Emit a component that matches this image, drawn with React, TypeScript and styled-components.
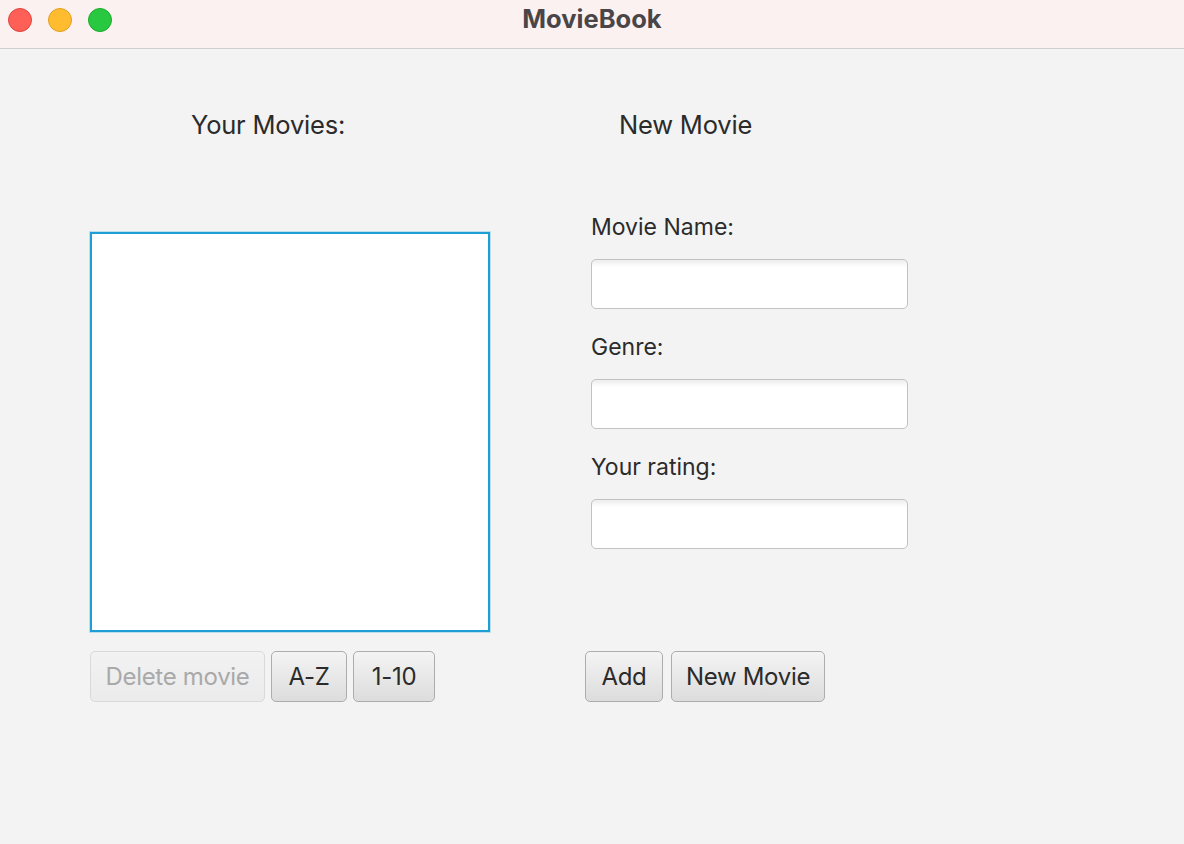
import React from "react";
import styled, { createGlobalStyle } from "styled-components";

const Global = createGlobalStyle`
  html, body { margin: 0; padding: 0; background: #f3f3f3; }
  body { font-family: Inter, "Noto Sans", sans-serif; color: #2b2b2b; }
  * { box-sizing: border-box; }
`;

const Window = styled.div`
  width: 1184px;
  height: 844px;
  background: #f3f3f3;
  display: flex;
  flex-direction: column;
`;

const TitleBar = styled.div`
  height: 49px;
  flex: none;
  background: #fcf1f1;
  border-bottom: 1px solid #cfcfcf;
  display: flex;
  align-items: center;
  position: relative;
  padding-left: 8px;
`;

const Lights = styled.div`
  display: flex;
  gap: 16px;
  margin-top: -9px;
`;

const Light = styled.span<{ $c: string; $b: string }>`
  width: 24px;
  height: 24px;
  border-radius: 50%;
  background: ${(p) => p.$c};
  border: 1px solid ${(p) => p.$b};
`;

const Title = styled.div`
  position: absolute;
  left: 0;
  right: 0;
  top: 4px;
  text-align: center;
  font-weight: 700;
  font-size: 25.5px;
  line-height: 30px;
  color: #4a4546;
`;

const Body = styled.div`
  display: grid;
  grid-template-columns: 400px 340px;
  column-gap: 95px;
  padding: 61px 0 0 90px;
`;

const Column = styled.div`
  display: flex;
  flex-direction: column;
`;

const Heading = styled.div<{ $indent: number }>`
  font-size: 25.5px;
  line-height: 30px;
  height: 30px;
  padding-left: ${(p) => p.$indent}px;
  color: #2b2b2b;
  letter-spacing: -0.2px;
`;

const ListBox = styled.div`
  margin-top: 92px;
  width: 400px;
  height: 400px;
  background: #fff;
  border: 2px solid #1d9ed4;
  box-shadow: 0 0 0 1px rgba(29, 158, 212, 0.25);
`;

const Form = styled.div`
  margin-top: 72px;
  padding-left: 6px;
  display: flex;
  flex-direction: column;
  height: 420px;
`;

const Label = styled.label`
  font-size: 23px;
  line-height: 30px;
  height: 30px;
  color: #2b2b2b;
`;

const Input = styled.input`
  margin-top: 17px;
  margin-bottom: 23px;
  width: 317px;
  height: 50px;
  flex: none;
  border: 1.5px solid #c2c2c2;
  border-radius: 5px;
  background: linear-gradient(#ececec, #ffffff 7px);
  outline: none;
  font-family: inherit;
  font-size: 22px;
  padding: 0 10px;
`;

const ButtonRow = styled.div<{ $gap: number }>`
  margin-top: 19px;
  display: flex;
  gap: ${(p) => p.$gap}px;
`;

const Button = styled.button<{ $w: number }>`
  width: ${(p) => p.$w}px;
  height: 51px;
  border: 1px solid #adadad;
  border-radius: 5px;
  background: linear-gradient(#f4f4f4, #dcdcdc);
  font-family: Inter, "Noto Sans", sans-serif;
  font-size: 24px;
  color: #2b2b2b;
  letter-spacing: -0.3px;
  padding: 0;
  cursor: default;
  &:disabled {
    color: #a9a9a9;
    border-color: #d9d9d9;
    background: linear-gradient(#f2f2f2, #ebebeb);
  }
`;

export default function App() {
  return (
    <Window>
      <Global />
      <TitleBar>
        <Lights>
          <Light $c="#fe5f57" $b="#e0443e" />
          <Light $c="#febc2e" $b="#dea123" />
          <Light $c="#28c840" $b="#1aab29" />
        </Lights>
        <Title>MovieBook</Title>
      </TitleBar>
      <Body>
        <Column>
          <Heading $indent={101}>Your Movies:</Heading>
          <ListBox />
          <ButtonRow $gap={6}>
            <Button $w={175} disabled>Delete movie</Button>
            <Button $w={76}>A-Z</Button>
            <Button $w={82}>1-10</Button>
          </ButtonRow>
        </Column>
        <Column>
          <Heading $indent={34}>New Movie</Heading>
          <Form>
            <Label>Movie Name:</Label>
            <Input />
            <Label>Genre:</Label>
            <Input />
            <Label>Your rating:</Label>
            <Input />
          </Form>
          <ButtonRow $gap={8}>
            <Button $w={78}>Add</Button>
            <Button $w={154}>New Movie</Button>
          </ButtonRow>
        </Column>
      </Body>
    </Window>
  );
}
